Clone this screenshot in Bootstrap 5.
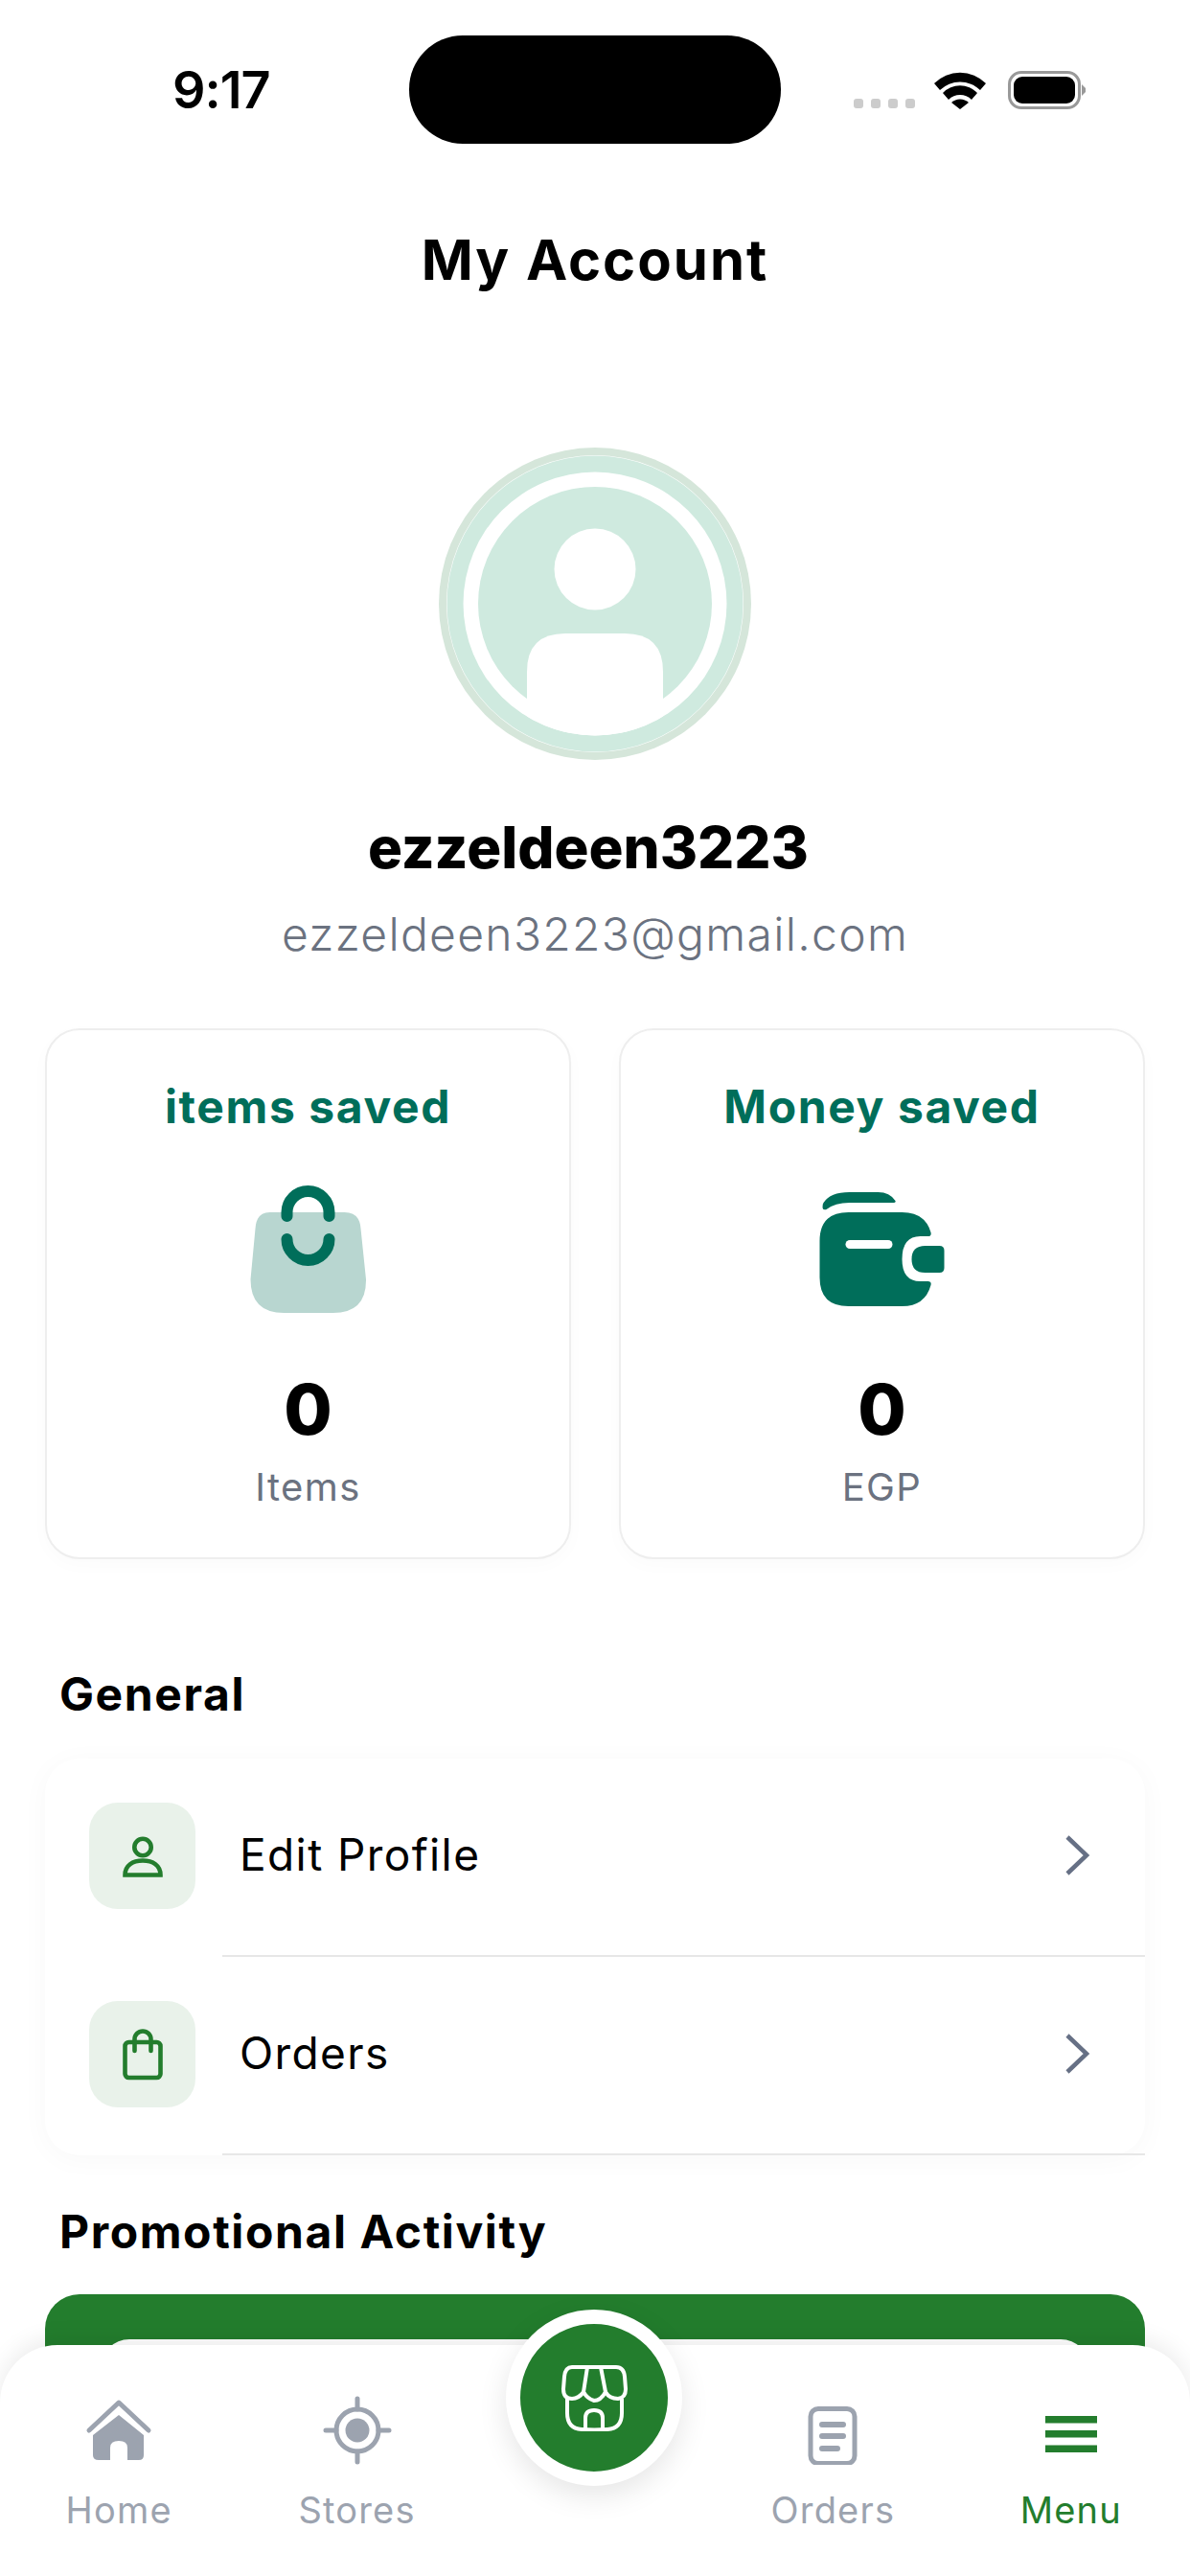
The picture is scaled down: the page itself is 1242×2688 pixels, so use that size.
<!DOCTYPE html>
<html lang="en">
<head>
  <meta charset="UTF-8" />
  <meta name="viewport" content="width=device-width, initial-scale=1.0"/>
  <title>My Account</title>
  <link href="https://cdn.jsdelivr.net/npm/bootstrap@5.3.0/dist/css/bootstrap.min.css" rel="stylesheet"/>
  <style>
    html, body {
      height: 2688px;
      overflow: hidden;
    }

    body {
      background-color: #fff;
      color: #000;
      font-family: 'Inter', 'Liberation Sans', sans-serif;
    }

    svg {
      display: block;
    }

    .app-screen {
      height: 2688px;
      overflow: hidden;
      position: relative;
    }

    /* status bar */
    .status-bar {
      height: 231px;
      padding: 37px 109px 0 180px;
    }

    .status-time {
      font-size: 54px;
      font-weight: 600;
      line-height: 114px;
      letter-spacing: -1px;
      width: 247px;
    }

    .island {
      background: #000;
      border-radius: 56px;
      height: 113px;
      width: 388px;
    }

    .signal-dots {
      margin-top: 66px;
      margin-left: 76px;
    }

    .signal-dots span {
      background: #ccc;
      border-radius: 3px;
      height: 10px;
      width: 10px;
    }

    .status-right {
      gap: 23px;
      margin-top: 37px;
    }

    .battery-box {
      border: 3px solid #999;
      border-radius: 14px;
      height: 40px;
      padding: 3px;
      width: 76px;
    }

    .battery-box span {
      background: #000;
      border-radius: 9px;
      display: block;
      height: 100%;
    }

    /* profile head */
    .page-title {
      font-size: 58px;
      font-weight: 700;
      letter-spacing: 2px;
      line-height: 80px;
      margin: 0;
    }

    .avatar-wrap {
      margin-top: 156px;
    }

    .user-name {
      font-size: 60px;
      font-weight: 800;
      line-height: 70px;
      margin: 56px 0 0;
      padding-right: 14px;
    }

    .user-mail {
      color: #6b7280;
      font-size: 48px;
      font-weight: 300;
      letter-spacing: 1.3px;
      line-height: 60px;
      margin: 26px 0 0;
    }

    .page-body {
      padding: 68px 47px 0;
    }

    /* stat cards */
    .stat-row {
      --bs-gutter-x: 50px;
    }

    .stat-card {
      border: 2px solid #eeeeee;
      border-radius: 36px;
      box-shadow: 0 6px 20px rgba(0, 0, 0, 0.02);
      height: 554px;
      padding-top: 50px;
    }

    .stat-title {
      color: #006e5a;
      font-size: 48px;
      font-weight: 700;
      letter-spacing: 1.6px;
      line-height: 60px;
    }

    .stat-icon {
      margin-top: 50px;
    }

    .stat-num {
      font-size: 73px;
      font-weight: 800;
      line-height: 90px;
      margin-top: 54px;
    }

    .stat-unit {
      color: #6b7280;
      font-size: 40px;
      letter-spacing: 1.4px;
      line-height: 50px;
      margin-top: 11px;
    }

    /* lists */
    .block-title {
      font-size: 48px;
      font-weight: 700;
      letter-spacing: 1.6px;
      line-height: 60px;
      margin: 0;
      padding-left: 15px;
    }

    .general-title {
      margin-top: 111px;
    }

    .menu-card {
      background: #fff;
      border-radius: 36px;
      box-shadow: 0 4px 30px rgba(0, 0, 0, 0.03);
      margin: 37px 0 50px;
    }

    .menu-row {
      background: transparent;
      border: 0;
      color: #000;
      padding: 0;
    }

    .menu-thumb {
      padding-left: 46px;
      padding-top: 46px;
      width: 185px;
    }

    .thumb-box {
      background: #e9f2ea;
      border-radius: 30px;
      height: 111px;
      width: 111px;
    }

    .menu-body {
      border-bottom: 2px solid #e7e7e7;
      height: 207px;
      padding: 0 57px 4px 18px;
    }

    .menu-label {
      font-size: 46px;
      letter-spacing: 1.4px;
    }

    .promo-banner {
      background: #237d2d;
      border-radius: 36px;
      height: 300px;
      margin-top: 35px;
      padding: 47px 58px 0;
    }

    .promo-inner {
      background: #fff;
      border-radius: 30px;
      height: 200px;
    }

    /* bottom tabs */
    .tab-bar {
      background: #fff;
      border-radius: 60px 60px 0 0;
      bottom: 0;
      box-shadow: 0 -6px 24px rgba(0, 0, 0, 0.08);
      height: 241px;
      left: 0;
      padding-top: 53px;
      position: absolute;
      right: 0;
    }

    .tab-item {
      color: #9ca3af;
      font-size: 38px;
      letter-spacing: 1.2px;
      line-height: 46px;
      width: 20%;
    }

    .tab-item svg {
      margin-bottom: 24px;
    }

    .tab-on {
      color: #237d2d;
    }

    .shop-btn {
      align-items: center;
      background: #237d2d;
      border: 15px solid #fff;
      border-radius: 50%;
      box-shadow: 0 10px 30px rgba(0, 0, 0, 0.1);
      box-sizing: content-box;
      display: flex;
      height: 154px;
      justify-content: center;
      left: 528px;
      position: absolute;
      top: -37px;
      width: 154px;
    }
  </style>
</head>
<body>
  <div class="app-screen">

    <!-- Status bar -->
    <div class="status-bar d-flex align-items-start">
      <div class="status-time">9:17</div>
      <div class="island"></div>
      <div class="signal-dots d-flex gap-2">
        <span></span><span></span><span></span><span></span>
      </div>
      <div class="status-right d-flex align-items-center ms-auto">
        <svg width="54" height="40" viewBox="0 0 54 40">
          <path d="M0 13 A38 38 0 0 1 54 13 L48 20 A30 30 0 0 0 6 20 Z" fill="#000"/>
          <path d="M9 23 A25 25 0 0 1 45 23 L39 30 A17 17 0 0 0 15 30 Z" fill="#000"/>
          <path d="M18 33 A13 13 0 0 1 36 33 L27 40 Z" fill="#000"/>
        </svg>
        <div class="d-flex align-items-center">
          <div class="battery-box"><span></span></div>
          <svg width="5" height="12" viewBox="0 0 5 12"><path d="M1 0 L5 4 V8 L1 12 Z" fill="#999"/></svg>
        </div>
      </div>
    </div>

    <h1 class="page-title text-center">My Account</h1>

    <!-- Avatar -->
    <div class="avatar-wrap d-flex justify-content-center">
      <svg width="326" height="326" viewBox="0 0 326 326">
        <defs>
          <clipPath id="avatarClip"><circle cx="163" cy="163" r="137.5"/></clipPath>
        </defs>
        <circle cx="163" cy="163" r="163" fill="#d5e6da"/>
        <circle cx="163" cy="163" r="155" fill="#fff"/>
        <circle cx="163" cy="163" r="154.500" fill="#cfeadf"/>
        <circle cx="163" cy="163" r="137.5" fill="#fff"/>
        <circle cx="163" cy="163" r="122" fill="#cfeadf"/>
        <circle cx="163" cy="127" r="42.5" fill="#fff"/>
        <path d="M92 326 V234 Q92 194 132 194 H194 Q234 194 234 234 V326 Z" fill="#fff" clip-path="url(#avatarClip)"/>
      </svg>
    </div>

    <div class="user-name text-center">ezzeldeen3223</div>
    <div class="user-mail text-center">ezzeldeen3223@gmail.com</div>

    <div class="page-body">
      <!-- Stats -->
      <div class="row stat-row">
        <div class="col-6">
          <div class="card stat-card text-center align-items-center">
            <div class="stat-title">items saved</div>
            <svg class="stat-icon" width="137" height="137" viewBox="23.5 15 137 137">
              <path d="M52 45 H130 Q146 45 147 62 L152.5 115 Q153 150 118 150 H67 Q32 150 32 115 L37 62 Q38 45 52 45 Z" fill="#b8d6d0"/>
              <path d="M70 49 V45 A22 22 0 0 1 114 45 V49 M70 73 A22 22 0 0 0 114 73" fill="none" stroke="#006e5a" stroke-width="12" stroke-linecap="round"/>
            </svg>
            <div class="stat-num">0</div>
            <div class="stat-unit">Items</div>
          </div>
        </div>
        <div class="col-6">
          <div class="card stat-card text-center align-items-center">
            <div class="stat-title">Money saved</div>
            <svg class="stat-icon" width="137" height="137" viewBox="23.5 15 137 137" fill="#006e5a">
              <path d="M30 40 Q30 36 31 35 Q38 24 58 24 H88 Q100 24 106 33 Q107 35 103 35 H58 Q43 35 34 42 Q30 43 30 40 Z"/>
              <path d="M57 45 H113 Q137 45 143 66 Q144 70 140 70 H132 Q113 70 113 94 Q113 117 132 117 H140 Q144 117 143 121 Q137 143 113 143 H57 Q27 143 27 113 V75 Q27 45 57 45 Z"/>
              <rect x="54" y="74" width="49" height="9" rx="4.5" fill="#fff"/>
              <path d="M137 80 H152 Q157 80 157 85 V103 Q157 108 152 108 H137 Q123 108 123 94 Q123 80 137 80 Z"/>
            </svg>
            <div class="stat-num">0</div>
            <div class="stat-unit">EGP</div>
          </div>
        </div>
      </div>

      <!-- General -->
      <h2 class="block-title general-title">General</h2>
      <div class="list-group menu-card">
        <div class="list-group-item menu-row d-flex">
          <div class="menu-thumb">
            <div class="thumb-box d-flex align-items-center justify-content-center">
              <svg width="60" height="60" viewBox="38.5 36.5 60 60" fill="none" stroke="#237d2d" stroke-width="4.6">
                <circle cx="68.5" cy="57" r="8.7"/>
                <path d="M50 86 C50 76 58 71 68.5 71 C79 71 87 76 87 86 Z"/>
              </svg>
            </div>
          </div>
          <div class="menu-body flex-grow-1 d-flex align-items-center justify-content-between">
            <span class="menu-label">Edit Profile</span>
            <svg width="28" height="44" viewBox="0 0 28 44" fill="none" stroke="#667085" stroke-width="4.5"><path d="M4 3 L24 22 L4 41"/></svg>
          </div>
        </div>
        <div class="list-group-item menu-row d-flex">
          <div class="menu-thumb">
            <div class="thumb-box d-flex align-items-center justify-content-center">
              <svg width="60" height="60" viewBox="38.5 244 60 60" fill="none" stroke="#237d2d" stroke-width="4.6" stroke-linecap="round">
                <rect x="50" y="261" width="37" height="37" rx="4"/>
                <path d="M60 270 V258 A8.5 8.5 0 0 1 77 258 V270"/>
              </svg>
            </div>
          </div>
          <div class="menu-body flex-grow-1 d-flex align-items-center justify-content-between">
            <span class="menu-label">Orders</span>
            <svg width="28" height="44" viewBox="0 0 28 44" fill="none" stroke="#667085" stroke-width="4.5"><path d="M4 3 L24 22 L4 41"/></svg>
          </div>
        </div>
      </div>

      <!-- Promotional Activity -->
      <h2 class="block-title">Promotional Activity</h2>
      <div class="promo-banner">
        <div class="promo-inner"></div>
      </div>
    </div>

    <!-- Bottom tabs -->
    <div class="tab-bar d-flex">
      <div class="tab-item d-flex flex-column align-items-center">
        <svg width="72" height="72" viewBox="0 0 72 72">
          <path d="M5 36 L36 7 L67 36" fill="none" stroke="#9ca3af" stroke-width="5" stroke-linecap="round" stroke-linejoin="round"/>
          <path d="M36 20 L62 41 V62 Q62 67 57 67 H45 V54 Q45 47 36 47 Q27 47 27 54 V67 H15 Q9 67 9 62 V41 Z" fill="#9ca3af"/>
        </svg>
        <span>Home</span>
      </div>
      <div class="tab-item d-flex flex-column align-items-center">
        <svg width="72" height="72" viewBox="0 0 72 72" fill="none" stroke="#9ca3af" stroke-width="5">
          <circle cx="36" cy="36" r="22"/>
          <circle cx="36" cy="36" r="12.5" fill="#9ca3af" stroke="none"/>
          <path d="M36 3 V14 M36 58 V69 M3 36 H14 M58 36 H69" stroke-linecap="round"/>
        </svg>
        <span>Stores</span>
      </div>
      <div class="tab-item"></div>
      <div class="tab-item d-flex flex-column align-items-center">
        <svg width="72" height="72" viewBox="0 0 72 72" fill="none" stroke="#9ca3af">
          <rect x="13" y="13.500" width="46" height="57" rx="8" stroke-width="5"/>
          <path d="M25 30 H47 M25 42 H47 M25 55 H41" stroke-width="6" stroke-linecap="round"/>
        </svg>
        <span>Orders</span>
      </div>
      <div class="tab-item tab-on d-flex flex-column align-items-center">
        <svg width="72" height="72" viewBox="0 0 72 72" fill="#237d2d">
          <rect x="9" y="21" width="54" height="7.500"/>
          <rect x="9" y="36" width="54" height="7.500"/>
          <rect x="9" y="51.500" width="54" height="7.500"/>
        </svg>
        <span>Menu</span>
      </div>

      <div class="shop-btn">
        <svg width="70" height="70" viewBox="76 77 70 70" fill="none" stroke="#fff" stroke-width="4" stroke-linejoin="round">
          <path d="M88 80 H134 Q142 80 143 90 L144 103 Q144 112 136 113 Q127 113 123 106 Q118 115 111 115 Q104 113 100 106 Q95 113 88 113 Q79 113 79 103 L80 90 Q81 80 88 80 Z"/>
          <path d="M104 80 L100 106 M118 80 L123 106"/>
          <path d="M83 113 V128 Q83 144 98 145 Q111 146 125 145 Q140 144 140 128 V113"/>
          <path d="M102 145 V133 Q102 125 111 125 Q120 125 120 133 V145"/>
        </svg>
      </div>
    </div>

  </div>
  <script src="https://cdn.jsdelivr.net/npm/bootstrap@5.3.0/dist/js/bootstrap.bundle.min.js"></script>
</body>
</html>
